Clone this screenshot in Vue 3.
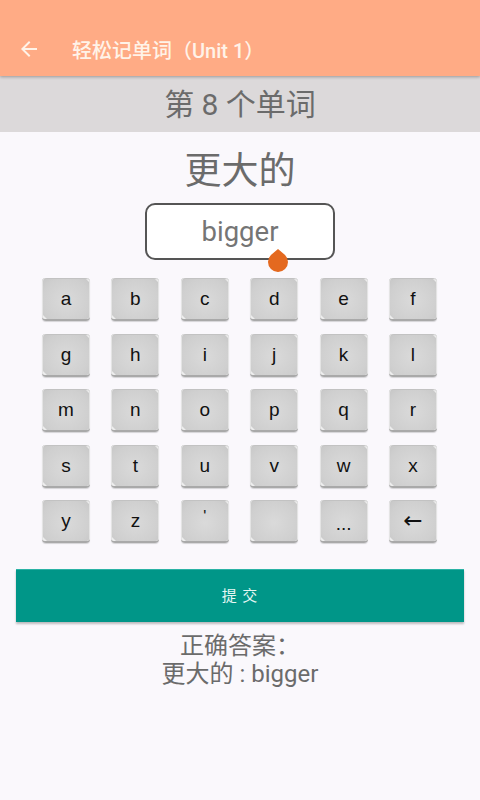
<template>
  <div class="page">
    <header class="toolbar">
      <svg class="back" viewBox="0 0 24 24" width="24" height="24">
        <path d="M20 11H7.83l5.59-5.59L12 4l-8 8 8 8 1.41-1.41L7.83 13H20v-2z" fill="#fff3e8" />
      </svg>
      <span class="title">轻松记单词（Unit 1）</span>
    </header>

    <div class="counter">第 8 个单词</div>
    <div class="meaning">更大的</div>

    <div class="input-box">
      <span>bigger</span>
      <!-- 光标手柄 -->
      <svg class="handle" viewBox="0 0 22 24" width="22" height="24">
        <path d="M11 1 L18.07 6.93 A10 10 0 1 1 3.93 6.93 Z" fill="#e4691f" />
      </svg>
    </div>

    <div class="keyboard">
      <div v-for="key in keys" :key="key.id" class="key" :class="key.cls">{{ key.label }}</div>
    </div>

    <button class="submit">提 交</button>

    <div class="answer">
      <div>正确答案：</div>
      <div>更大的 : bigger</div>
    </div>
  </div>
</template>

<script setup>
const letters = "abcdefghijklmnopqrstuvwxyz'".split('')
const keys = letters.map((label) => ({ id: label, label, cls: label === "'" ? 'quote' : '' }))
keys.push({ id: 'blank', label: '', cls: '' })
keys.push({ id: 'dots', label: '...', cls: 'dots' })
keys.push({ id: 'del', label: '←', cls: 'del' })
</script>

<style>
html, body {
  margin: 0;
  background: #faf8fc;
}
</style>

<style scoped>
.page {
  width: 480px;
  height: 800px;
  overflow: hidden;
  background: #faf8fc;
  font-family: Roboto, "Noto Sans CJK SC", sans-serif;
  color: #6b6b6b;
  display: flex;
  flex-direction: column;
  align-items: center;
}

.toolbar {
  width: 100%;
  height: 76px;
  box-sizing: border-box;
  padding: 22px 0 0 17px;
  background: #ffab85;
  box-shadow: 0 1px 3px rgba(0, 0, 0, 0.3);
  display: flex;
  align-items: center;
  position: relative;
  z-index: 1;
  flex-shrink: 0;
}

.back {
  width: 24px;
  height: 24px;
}

.title {
  margin-left: 31px;
  font-size: 20px;
  font-weight: 500;
  color: #fff3e8;
}

.counter {
  width: 100%;
  height: 56px;
  line-height: 58px;
  background: #dcd9da;
  text-align: center;
  font-size: 30px;
  flex-shrink: 0;
}

.meaning {
  margin-top: 16px;
  height: 48px;
  line-height: 48px;
  font-size: 37px;
}

.input-box {
  margin-top: 7px;
  width: 190px;
  height: 57px;
  box-sizing: border-box;
  border: 2px solid #555;
  border-radius: 10px;
  background: #fff;
  text-align: center;
  line-height: 54px;
  font-size: 27.5px;
  color: #757575;
  position: relative;
  flex-shrink: 0;
}

.handle {
  position: absolute;
  left: 120px;
  top: 43px;
}

.keyboard {
  margin-top: 18px;
  margin-right: 1px;
  width: 395px;
  display: grid;
  grid-template-columns: repeat(6, 48px);
  justify-content: space-between;
  grid-auto-rows: 43px;
  row-gap: 12.6px;
}

.key {
  box-sizing: border-box;
  padding-top: 1px;
  border-radius: 4px;
  border-bottom: 2px solid #a9a9a9;
  background:
    linear-gradient(225deg, #f0f0f0 0, #f0f0f0 3px, transparent 4px),
    linear-gradient(45deg, #eeeeee 0, #eeeeee 3px, transparent 4px),
    radial-gradient(ellipse at 50% 55%, #dadada 0%, #cfcfcf 70%, #c6c6c6 100%);
  box-shadow:
    inset 1px 0 0 #e4e4e4,
    inset -1px 0 0 #e4e4e4,
    inset 0 1px 0 #c2c2c2,
    0 1px 1px rgba(0, 0, 0, 0.15);
  display: flex;
  align-items: center;
  justify-content: center;
  color: #111;
  font-size: 19px;
  font-family: "Liberation Sans", sans-serif;
}

.quote {
  align-items: flex-start;
  padding-top: 8px;
  font-size: 16px;
}

.dots {
  align-items: flex-end;
  padding-bottom: 6px;
  font-size: 19px;
}

.del {
  font-family: "DejaVu Sans", sans-serif;
  font-size: 23px;
  padding-bottom: 2px;
}

.submit {
  margin-top: 26px;
  width: 448px;
  height: 53px;
  border: 0;
  padding: 0 0 2px;
  background: #009688;
  box-shadow: inset 0 1px 0 #2bb3a5, 0 2px 2px rgba(0, 0, 0, 0.25);
  color: #e6f7f3;
  font-family: inherit;
  font-size: 15px;
  letter-spacing: 1px;
  flex-shrink: 0;
}

.answer {
  margin-top: 10px;
  text-align: center;
  font-size: 24px;
  line-height: 28px;
}
</style>
